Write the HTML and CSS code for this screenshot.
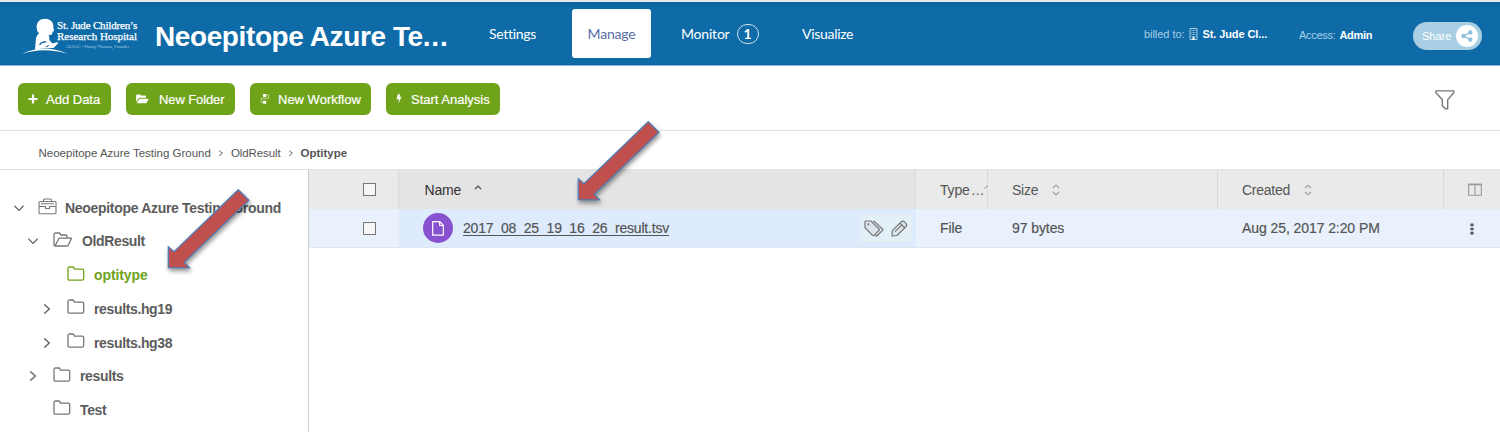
FILE: index.html
```html
<!DOCTYPE html>
<html lang="en">
<head>
<meta charset="utf-8">
<title>Neoepitope Azure Testing Ground</title>
<link rel="stylesheet" href="styles.css">
</head>
<body>
<svg class="defs" width="0" height="0">
  <symbol id="folder" viewBox="0 0 18 16"><path d="M1 12.6V2.6Q1 1 2.6 1H5.6Q6.6 1 7 2L7.4 3.2H15.2Q16.7 3.2 16.7 4.8V12.6Q16.7 14.2 15.2 14.2H2.6Q1 14.2 1 12.6Z" fill="none" stroke="currentColor" stroke-width="1.3"/></symbol>
  <symbol id="down" viewBox="0 0 10 10"><path d="M.4 2.8L5 7.4L9.6 2.8" fill="none" stroke="currentColor" stroke-width="1.3"/></symbol>
  <symbol id="right" viewBox="0 0 10 10"><path d="M2.3.4L7.3 5L2.3 9.6" fill="none" stroke="currentColor" stroke-width="1.4"/></symbol>
  <symbol id="sort" viewBox="0 0 8 12"><path d="M1 4L4 1.2L7 4M1 8L4 10.8L7 8" fill="none" stroke="currentColor" stroke-width="1.1"/></symbol>
  <symbol id="arrow" viewBox="0 0 90 90"><path d="M3.3 59.7L9 64.7L73.3 2.7L84 13.3L19.3 75.3L24.7 81L3.3 80.7Z" fill="#c0504d" stroke="#4a7ebb" stroke-width="1.2"/></symbol>
</svg>

<header class="header">
  <div class="logo">
    <svg class="logo-mark" viewBox="0 0 48 38">
      <path d="M0 36Q22 25 46 36Q22 28.6 0 36Z"/>
      <path d="M14.6 9.5C14.6 4 18 .8 23 .8C28.5 .8 31.8 4.5 31.4 9.5L32 13L30.6 13.8L30 16.6L26.6 17.2C27.6 19 27.4 21 27.2 22L30.5 25.5L35.6 24L36 25.6L31.5 30Q22 29.4 13 31.8L14 20Q14.8 17 17 15.2Q14.6 13 14.6 9.5Z"/>
      <path class="cut" d="M17 27Q18 23.4 23.4 23L24.4 24.6Q19.6 24.6 18.6 27ZM23 28.2L27.6 27L25.4 29Z"/>
    </svg>
    <div class="logo-text">
      <span class="l1">St. Jude Children’s</span>
      <span class="l2">Research Hospital</span>
      <span class="l3">ALSAC • Danny Thomas, Founder</span>
    </div>
  </div>
  <h1 class="title">Neoepitope Azure Te<span class="dots">...</span></h1>
  <nav class="nav">
    <a class="tab settings">Settings</a>
    <a class="tab manage">Manage</a>
    <a class="tab monitor">Monitor<span class="badge">1</span></a>
    <a class="tab visualize">Visualize</a>
  </nav>
  <div class="account">
    <span class="billed">billed to:</span>
    <svg class="building" viewBox="0 0 9 12"><path d="M1 .5H8V11.5H1Z" fill="none" stroke="#a9cfe6"/><path d="M3 2V9M4.5 2V9M6 2V9" stroke="#a9cfe6" stroke-width="1" stroke-dasharray="1 1" fill="none"/><path d="M3.5 9H5.5V12H3.5Z" fill="#fff"/></svg>
    <b class="org">St. Jude Cl...</b>
  </div>
  <div class="access"><span>Access:</span><b>Admin</b></div>
  <button class="share"><span>Share</span><i class="share-dot"><svg viewBox="0 0 12 12"><path d="M9.5 2.4L2.5 6L9.5 9.6" fill="none" stroke="#8fc0da" stroke-width="1.3"/><g fill="#8fc0da"><circle cx="9.3" cy="2.5" r="2.2"/><circle cx="2.5" cy="6" r="2.2"/><circle cx="9.3" cy="9.5" r="2.2"/></g></svg></i></button>
</header>

<div class="toolbar">
  <button class="btn add"><svg viewBox="0 0 10 10"><path d="M5 .5V9.5M.5 5H9.5" stroke="#fff" stroke-width="2.2"/></svg><span>Add Data</span></button>
  <button class="btn folder"><svg viewBox="0 0 13 10"><path d="M.2 8.2V1.6Q.2.6 1.2.6H3.6Q4.5.6 4.7 1.6H9Q10 1.6 10 2.6V3.7H4Q3 3.7 2.5 4.5ZM.8 9.3L3.2 5.2Q3.6 4.7 4.2 4.7H12.8L10.6 8.8Q10.3 9.3 9.6 9.3Z" fill="#fff"/></svg><span>New Folder</span></button>
  <button class="btn workflow"><svg viewBox="0 0 10 12"><path d="M3 1H6.2V4H3ZM3 7.8H6.2V10.8H3Z" fill="#fff"/><path d="M6.2 2H8.6V5.4H1.2V9.4H3" fill="none" stroke="#c5dba0" stroke-width=".9"/></svg><span>New Workflow</span></button>
  <button class="btn start"><svg viewBox="0 0 7 12"><path d="M2.1.6H5.1L4 3.7L6.6 3.2L2.7 11.4L3.5 6L.5 6.6Z" fill="#fff"/></svg><span>Start Analysis</span></button>
  <svg class="filter" viewBox="0 0 20 20"><path d="M.9.9H18.8V2.8L12.7 9.6V18.8H10.4L7.3 15.7V9.6L.9 2.8Z" fill="none" stroke="#777" stroke-width="1.4" stroke-linejoin="round"/></svg>
</div>

<div class="crumbs">
  <span class="c1">Neoepitope Azure Testing Ground</span>
  <svg viewBox="0 0 6 8"><path d="M1.2 1.6L4.4 4.2L1.2 6.8" fill="none" stroke="#666"/></svg>
  <span class="c2">OldResult</span>
  <svg viewBox="0 0 6 8"><path d="M1.2 1.6L4.4 4.2L1.2 6.8" fill="none" stroke="#666"/></svg>
  <b class="c3">Optitype</b>
</div>

<main class="main">
  <aside class="tree">
    <div class="node root"><svg class="chev"><use href="#down"/></svg>
      <svg class="case" viewBox="0 0 19 17"><path d="M2 3.5H17Q18 3.5 18 4.5V14.8Q18 15.8 17 15.8H2Q1 15.8 1 14.8V4.5Q1 3.5 2 3.5ZM5.5 3.5V2Q5.5 1 6.5 1H12.5Q13.5 1 13.5 2V3.5M1 8.5H7M12 8.5H18M3 5.8H16M7.5 8V10.5H11.5V8" fill="none" stroke="#777" stroke-width="1.1"/></svg>
      <span class="t-root">Neoepitope Azure Testing Ground</span></div>
    <div class="node old"><svg class="chev"><use href="#down"/></svg>
      <svg class="open" viewBox="0 0 20 16"><path d="M2 14L1 13V2.5Q1 1 2.5 1H6Q7 1 7.4 2L7.8 3H12.5Q14 3 14 4.5V6M2 14L5.6 7Q6 6.2 7 6.2H18.5L15.4 13Q15 14 14 14Z" fill="none" stroke="#777" stroke-width="1.3" stroke-linejoin="round"/></svg>
      <span class="t-old">OldResult</span></div>
    <div class="node deep active"><i class="chev"></i><svg class="fold"><use href="#folder"/></svg><span class="t-opt">optitype</span></div>
    <div class="node deep"><svg class="chev"><use href="#right"/></svg><svg class="fold"><use href="#folder"/></svg><span class="t-hg">results.hg19</span></div>
    <div class="node deep"><svg class="chev"><use href="#right"/></svg><svg class="fold"><use href="#folder"/></svg><span class="t-hg">results.hg38</span></div>
    <div class="node mid"><svg class="chev"><use href="#right"/></svg><svg class="fold"><use href="#folder"/></svg><span class="t-res">results</span></div>
    <div class="node mid"><i class="chev"></i><svg class="fold"><use href="#folder"/></svg><span class="t-test">Test</span></div>
  </aside>
  <section class="table">
    <div class="row head">
      <div class="check"><i class="box"></i></div>
      <div class="name"><span class="h-name">Name</span><svg class="caret" viewBox="0 0 8 5"><path d="M1 4.2L4 1.2L7 4.2" fill="none" stroke="#444" stroke-width="1.2"/></svg></div>
      <div class="type"><span class="h-type">Type</span><span class="h-dots">...</span><svg class="clip" viewBox="0 0 4 5"><path d="M.3 3.6L2.6 1.4L3.8 1.6" fill="none" stroke="#888"/></svg></div>
      <div class="size"><span class="h-size">Size</span><svg class="sort"><use href="#sort"/></svg></div>
      <div class="created"><span class="h-created">Created</span><svg class="sort"><use href="#sort"/></svg></div>
      <div class="tools"><svg class="cols" viewBox="0 0 14 13"><path d="M.7 1.2H13.3V12.3H.7ZM7 1V12" fill="none" stroke="#999" stroke-width="1.1"/><path d="M.5 1.5H13.5" stroke="#999" stroke-width="1.6"/></svg></div>
    </div>
    <div class="row item">
      <div class="check"><i class="box"></i></div>
      <div class="name"><i class="file"><svg viewBox="0 0 12 15"><path d="M.7.7H7.8L11.3 4.3V14.2H.7ZM7.6.7V4.5H11.3" fill="none" stroke="#fff" stroke-width="1.2"/></svg></i>
        <a class="link">2017_08_25_19_16_26_result.tsv</a>
        <div class="actions">
          <svg class="tag" viewBox="0 0 20 17"><path d="M1 1.8Q1 1 1.8 1H7L15 9Q15.7 9.7 15 10.4L10 15.4Q9.3 16 8.6 15.3L1 7.7ZM9.2 1.3H10.3L18.6 9.2Q19.2 9.8 18.6 10.4L13 15.8H11" fill="#dce5ec" stroke="#777" stroke-width="1.2"/><circle cx="4.4" cy="4.3" r="1" fill="#777"/></svg>
          <svg class="pencil" viewBox="0 0 17 17"><path d="M1 16L1.3 10.6L10.3 1.8Q11.8.5 13.4 1.8L15 3.4Q16.4 5 15 6.5L6 15.5ZM9 3.2L13.7 7.8M4 11.6L10.6 5.1" fill="#dce5ec" stroke="#777" stroke-width="1.2" stroke-linejoin="round"/></svg>
        </div></div>
      <div class="type"><span class="v-type">File</span></div>
      <div class="size"><span class="v-size">97 bytes</span></div>
      <div class="created"><span class="v-created">Aug 25, 2017 2:20 PM</span></div>
      <div class="tools"><svg class="more" viewBox="0 0 4 12"><path d="M.4.5H3.6V3.2H.4ZM.4 4.7H3.6V7.3H.4ZM.4 8.8H3.6V11.5H.4Z" fill="#555"/></svg></div>
    </div>
  </section>
</main>
<svg class="pointer to-folder"><use href="#arrow"/></svg>
<svg class="pointer to-file"><use href="#arrow"/></svg>
</body>
</html>
```
FILE: styles.css
```css
* { box-sizing: border-box; }
body { margin: 0; width: 1500px; height: 432px; overflow: hidden; background: #fff; color: #555; font: 14px "Liberation Sans", Arial, sans-serif; }
span, b, a, h1 { white-space: nowrap; }
svg, i { display: block; flex: none; }
button { border: 0; margin: 0; padding: 0; font-family: inherit; }
.defs { position: absolute; }

.header { display: flex; height: 66px; border-top: 2px solid #e3e8ec; border-bottom: 1px solid #8db5d0; background: linear-gradient(#0c6198, #0e6ba8 6px); color: #fff; }
.logo { display: flex; width: 155px; padding: 16px 0 0 22px; }
.logo-mark { width: 48px; height: 38px; fill: #fff; margin-right: -13px; }
.logo-mark .cut { fill: #0e6ba8; }
.logo-text { display: flex; flex-direction: column; font-family: "Liberation Serif", serif; -webkit-text-stroke: .25px #fff; }
.l1, .l2 { font-size: 11px; line-height: 10.5px; }
.l1 { padding-top: 2px; letter-spacing: -.18px; }
.l2 { letter-spacing: -.02px; }
.l3 { font-size: 4.5px; line-height: 7px; margin: 2px 0 0 9px; color: #a9cfe6; -webkit-text-stroke: 0; }
.title { width: 334px; margin: 0; padding-top: 18px; font-size: 28px; line-height: 34px; font-weight: 700; letter-spacing: -.4px; }
.dots { letter-spacing: .8px; }
.nav { display: flex; width: 655px; padding-top: 7px; font-family: Lato, sans-serif; font-size: 14px; letter-spacing: -.2px; }
.tab { display: flex; height: 49px; align-items: center; }
.settings { width: 83px; letter-spacing: -.3px; }
.manage { width: 79px; justify-content: center; background: #fff; color: #5a6da8; border-radius: 3px; margin-right: 30px; }
.monitor { width: 121px; }
.visualize { letter-spacing: -.3px; }
.badge { width: 22px; height: 20px; margin-left: 7px; border: 1px solid #cfe1ee; border-radius: 10px; text-align: center; line-height: 18px; font-weight: 700; }
.account { display: flex; width: 155px; padding-top: 25px; font-size: 11px; line-height: 14px; }
.org { letter-spacing: -.1px; }
.billed, .access span { color: #a9cfe6; }
.billed { letter-spacing: -.05px; }
.building { width: 9px; height: 12px; margin: 1px 4px 0 5px; }
.access { display: flex; gap: 4px; width: 114px; padding-top: 26px; font-size: 11px; line-height: 14px; letter-spacing: -.3px; }
.share { display: flex; align-items: center; justify-content: space-between; width: 69px; height: 28px; margin-top: 20px; padding: 0 4px 0 9px; border-radius: 14px; background: #a9cfe4; color: #fff; font-size: 11px; }
.share-dot { display: flex; width: 22px; height: 22px; align-items: center; justify-content: center; border-radius: 50%; background: #fff; }
.share-dot svg { width: 12px; height: 12px; }

.toolbar { display: flex; gap: 15px; height: 65px; padding: 17px 0 0 18px; border-bottom: 1px solid #e2e2e2; }
.btn { display: flex; align-items: center; height: 32px; padding-left: 10px; border-radius: 6px; background: #6fa31a; color: #fff; font-size: 13px; -webkit-text-stroke: .2px #fff; }
.add { width: 93px; } .add svg { width: 10px; height: 10px; margin-right: 8px; }
.folder { width: 109px; } .folder svg { width: 13px; height: 10px; margin-right: 10px; }
.folder span { letter-spacing: -.1px; }
.workflow { width: 121px; } .workflow svg { width: 10px; height: 12px; margin-right: 8px; }
.start { width: 114px; } .start svg { width: 6px; height: 12px; margin-right: 9px; }
.filter { width: 20px; height: 20px; margin: 7px 45px 0 auto; }

.crumbs { display: flex; align-items: center; height: 39px; padding: 5px 0 0 38.5px; border-bottom: 1px solid #e2e2e2; font-size: 11.5px; }
.crumbs svg { width: 6px; height: 8px; margin: 0 7px; }
.c2 { letter-spacing: -.1px; }
.main { display: flex; height: 262px; }
.tree { display: flex; flex-direction: column; width: 309px; padding-top: 21px; border-right: 1px solid #ccc; font-weight: 700; color: #5c5c5c; letter-spacing: -.36px; }
.node { display: flex; align-items: center; height: 33.7px; }
.old { padding-bottom: 1px; }
.chev { width: 10px; height: 10px; color: #666; }
.root { padding-left: 14px; } .old, .mid { padding-left: 28px; } .deep { padding-left: 42px; }
.case { width: 19px; height: 17px; margin: -3px 8px 0 14px; }
.open { width: 20px; height: 16px; margin: -3px 9px 0 15px; }
.fold { width: 18px; height: 16px; margin: -3px 9px 0 15px; color: #777; }
.active, .active .fold { color: #6fa31a; }
.t-root { letter-spacing: -.31px; }
.t-opt { letter-spacing: -.1px; }

.table { width: 1191px; }
.row { display: grid; grid-template-columns: 90px 517px 72px 230px 226px 56px; }
.row > div { display: flex; align-items: center; }
.head { height: 39px; background: #eaeaea; }
.head > div { border-right: 1px solid #d8d8d8; }
.head > .tools { border-right: 0; }
.head > .name { background: #e4e4e4; color: #333; }
.item { height: 39px; background: #e9f1fc; border-bottom: 1px solid #dde7f0; }
.item > .name { background: #deebfc; }
.check { padding-left: 54px; }
.box { width: 13px; height: 13px; border: 1px solid #777; background: #f6f6f6; }
.name { padding-left: 25.5px; }
.caret { width: 8px; height: 5px; margin: -4px 0 0 13px; }
.h-name { letter-spacing: -.2px; }
.type, .size, .created { padding-left: 24px; }
.h-type { letter-spacing: -.2px; }
.h-dots { margin-left: 2px; letter-spacing: .3px; }
.clip { width: 4px; height: 5px; margin-top: -4px; }
.sort { width: 8px; height: 12px; margin-left: 14px; color: #999; }
.h-size, .h-created { letter-spacing: -.25px; }
.tools { padding-left: 24px; }
.cols { width: 14px; height: 13px; }
.item > .name { padding-left: 24px; }
.file { display: flex; width: 30px; height: 30px; margin-right: 10px; align-items: center; justify-content: center; border-radius: 50%; background: #8751cf; }
.file svg { width: 12px; height: 15px; }
.link { text-decoration: underline; text-underline-offset: 2px; letter-spacing: -.19px; }
.item { -webkit-text-stroke: .2px #555; letter-spacing: -.08px; }
.item svg { -webkit-text-stroke: 0; }
.actions { display: flex; align-items: center; gap: 7px; width: 52px; height: 27px; margin: 0 4px 0 auto; padding-left: 3px; border: 1px solid #e6ecee; border-radius: 3px; background: #e4f0f8; }
.tag { width: 20px; height: 17px; } .pencil { width: 17px; height: 17px; }
.more { width: 4px; height: 12px; margin: 2px 0 0 2px; }
.pointer { position: absolute; width: 90px; height: 90px; filter: drop-shadow(1px 3px 2px rgba(0,0,0,.4)); }
.to-folder { left: 165px; top: 187px; }
.to-file { left: 575px; top: 118.5px; }
```
